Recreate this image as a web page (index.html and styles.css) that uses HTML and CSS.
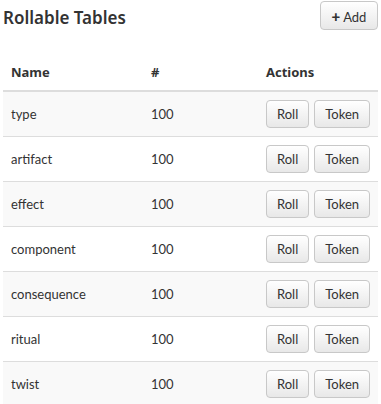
FILE: index.html
```html
<!DOCTYPE html>
<html lang="en">
<head>
    <meta charset="UTF-8">
    <meta name="viewport" content="width=device-width, initial-scale=1.0">
    <title>Rollable Tables</title>
    <link rel="stylesheet" href="styles.css">
</head>
<body>
    <!-- Page header -->
    <div class="page-header">
        <h2 class="page-title">Rollable Tables</h2>
        <button class="btn btn-add"><span class="plus">+</span> Add</button>
    </div>

    <!-- Tables list -->
    <table class="tables-list">
        <thead>
            <tr>
                <th class="col-name">Name</th>
                <th class="col-count">#</th>
                <th class="col-actions">Actions</th>
            </tr>
        </thead>
        <tbody>
            <tr><td>type</td><td>100</td><td class="actions"><button class="btn">Roll</button><button class="btn">Token</button></td></tr>
            <tr><td>artifact</td><td>100</td><td class="actions"><button class="btn">Roll</button><button class="btn">Token</button></td></tr>
            <tr><td>effect</td><td>100</td><td class="actions"><button class="btn">Roll</button><button class="btn">Token</button></td></tr>
            <tr><td>component</td><td>100</td><td class="actions"><button class="btn">Roll</button><button class="btn">Token</button></td></tr>
            <tr><td>consequence</td><td>100</td><td class="actions"><button class="btn">Roll</button><button class="btn">Token</button></td></tr>
            <tr><td>ritual</td><td>100</td><td class="actions"><button class="btn">Roll</button><button class="btn">Token</button></td></tr>
            <tr><td>twist</td><td>100</td><td class="actions"><button class="btn">Roll</button><button class="btn">Token</button></td></tr>
        </tbody>
    </table>
</body>
</html>
```

FILE: styles.css
```css
body {
    background-color: #fff;
    color: #333;
    font-family: Lato, "Open Sans", sans-serif;
    font-size: 13px;
    margin: 0;
    padding: 1px 3px 0 3px;
}

/* Header */
.page-header {
    display: flex;
    justify-content: space-between;
    align-items: flex-start;
    height: 55px;
}

.page-title {
    font-family: "Noto Sans", sans-serif;
    font-size: 17px;
    font-weight: 600;
    margin: 5px 0 0 0;
    color: #333;
}

.btn {
    font-family: Lato, sans-serif;
    font-size: 13px;
    color: #333;
    height: 28px;
    padding: 0 10px;
    background: linear-gradient(#fff, #e8e8e8);
    border: 1px solid #c8c8c8;
    border-radius: 4px;
    cursor: pointer;
}

.btn + .btn {
    margin-left: 5px;
}

.btn-add {
    width: 58px;
    height: 29px;
    padding: 0 6px;
}

.plus {
    font-weight: 900;
    font-size: 15px;
}

/* Table */
.tables-list {
    width: 100%;
    border-collapse: collapse;
    table-layout: fixed;
}

.tables-list th {
    text-align: left;
    font-family: "Noto Sans", sans-serif;
    font-weight: bold;
    font-size: 13px;
    padding: 7px 8px 9px 8px;
    height: 18px;
    border-bottom: 2px solid #ddd;
}

.tables-list td {
    padding: 8px 8px;
    height: 28px;
    border-top: 1px solid #ddd;
}

.tables-list td.actions {
    white-space: nowrap;
}

.tables-list tbody tr:first-child td {
    border-top: none;
}

.tables-list tbody tr:nth-child(odd) {
    background-color: #f9f9f9;
}

.col-name {
    width: 124px;
}

.col-count {
    width: 99px;
}
```
